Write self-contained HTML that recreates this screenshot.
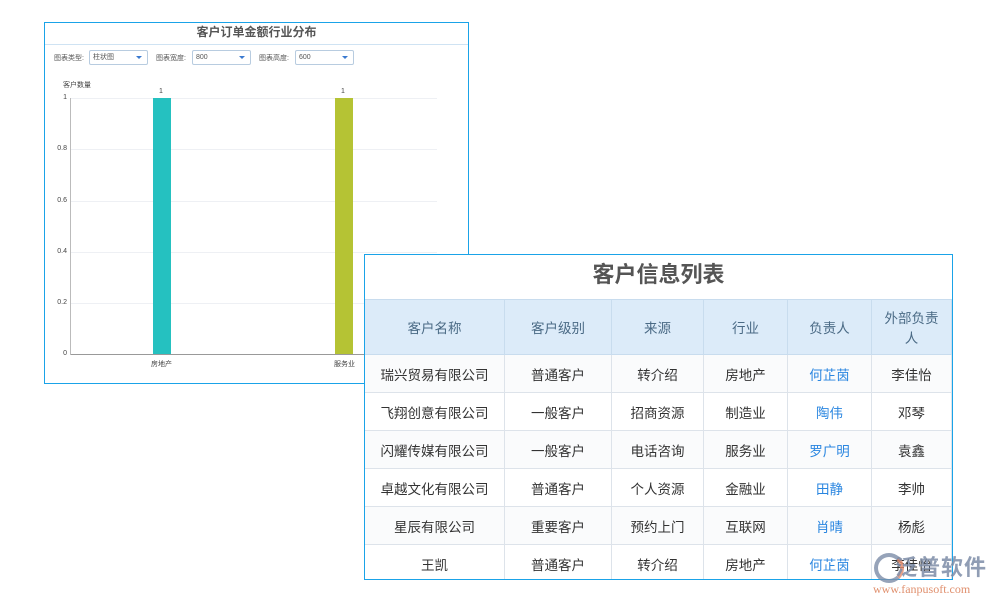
<!DOCTYPE html><html><head><meta charset="utf-8"><style>
body{margin:0;width:1000px;height:600px;background:#fff;position:relative;overflow:hidden;font-family:"Liberation Sans","Noto Sans CJK SC",sans-serif}
.a{position:absolute}
.chart{left:44px;top:22px;width:423px;height:360px;border:1px solid #1aa3e8;background:#fff}
.sel{position:absolute;top:27px;height:13px;border:1px solid #b8cce0;border-radius:2px;font-size:7px;line-height:13px;padding-left:3px;color:#555}
.sel:after{content:"";position:absolute;right:5px;top:5px;border:3px solid transparent;border-top:3px solid #3b7ad0}
.lbl{position:absolute;top:30px;font-size:7px;color:#555}
.gl{position:absolute;left:26px;width:366px;height:1px;background:#eef0f4}
.yl{position:absolute;left:10px;width:12px;text-align:right;font-size:7px;color:#444}
.tbl{left:364px;top:254px;width:587px;height:324px;border:1px solid #1aa3e8;background:#fff;overflow:hidden}
table{border-collapse:collapse;position:absolute;top:44px;left:-1px;width:588px}
td,th{border:1px solid #dde3ea;text-align:center;font-size:13.5px;color:#333;padding:0}
th{background:#dcebf9;color:#4a6a85;font-weight:normal;height:54px;border-color:#c8dcee}
td{height:37px}
tr:nth-child(even) td{background:#fafbfc}
.b{color:#2a86e0}
</style></head><body>
<div class="a chart">
<div class="a" style="left:0;top:0;width:423px;height:21px;border-bottom:1px solid #cfe3f3;text-align:center;font-size:12px;font-weight:bold;color:#555;line-height:19px">客户订单金额行业分布</div>
<div class="lbl" style="left:9px">图表类型:</div><div class="sel" style="left:44px;width:54px">柱状图</div>
<div class="lbl" style="left:111px">图表宽度:</div><div class="sel" style="left:147px;width:54px">800</div>
<div class="lbl" style="left:214px">图表高度:</div><div class="sel" style="left:250px;width:54px">600</div>
<div class="a" style="left:18px;top:57px;font-size:7px;color:#444">客户数量</div>
<div class="gl" style="top:75px"></div><div class="gl" style="top:126px"></div><div class="gl" style="top:178px"></div><div class="gl" style="top:229px"></div><div class="gl" style="top:280px"></div>
<div class="a" style="left:26px;top:331px;width:366px;height:1px;background:#999"></div>
<div class="a" style="left:25px;top:75px;width:1px;height:257px;background:#bbb"></div>
<div class="yl" style="top:71px">1</div><div class="yl" style="top:122px">0.8</div><div class="yl" style="top:174px">0.6</div><div class="yl" style="top:225px">0.4</div><div class="yl" style="top:276px">0.2</div><div class="yl" style="top:327px">0</div>
<div class="a" style="left:108px;top:75px;width:18px;height:256px;background:#25c1c0"></div>
<div class="a" style="left:290px;top:75px;width:18px;height:256px;background:#b5c334"></div>
<div class="a" style="left:114px;top:65px;font-size:7px;color:#444">1</div>
<div class="a" style="left:296px;top:65px;font-size:7px;color:#444">1</div>
<div class="a" style="left:106px;top:336px;font-size:7px;color:#444">房地产</div>
<div class="a" style="left:289px;top:336px;font-size:7px;color:#444">服务业</div>
</div>
<div class="a tbl">
<div class="a" style="left:0;top:0;width:587px;height:44px;text-align:center;font-size:22px;font-weight:bold;color:#555;line-height:40px">客户信息列表</div>
<table>
<tr><th style="width:139px">客户名称</th><th style="width:106px">客户级别</th><th style="width:91px">来源</th><th style="width:83px">行业</th><th style="width:83px">负责人</th><th>外部负责<br>人</th></tr>
<tr><td>瑞兴贸易有限公司</td><td>普通客户</td><td>转介绍</td><td>房地产</td><td class="b">何芷茵</td><td>李佳怡</td></tr>
<tr><td>飞翔创意有限公司</td><td>一般客户</td><td>招商资源</td><td>制造业</td><td class="b">陶伟</td><td>邓琴</td></tr>
<tr><td>闪耀传媒有限公司</td><td>一般客户</td><td>电话咨询</td><td>服务业</td><td class="b">罗广明</td><td>袁鑫</td></tr>
<tr><td>卓越文化有限公司</td><td>普通客户</td><td>个人资源</td><td>金融业</td><td class="b">田静</td><td>李帅</td></tr>
<tr><td>星辰有限公司</td><td>重要客户</td><td>预约上门</td><td>互联网</td><td class="b">肖晴</td><td>杨彪</td></tr>
<tr><td>王凯</td><td>普通客户</td><td>转介绍</td><td>房地产</td><td class="b">何芷茵</td><td>李佳怡</td></tr>
</table></div>
<div class="a" style="left:874px;top:553px;width:22px;height:22px;border-radius:50%;border:4px solid #7d8da8;border-right-color:#e58a6a;opacity:.8"></div>
<div class="a" style="left:895px;top:550px;font-size:22px;font-weight:bold;color:#7d8da8;letter-spacing:1px;opacity:.85">泛普软件</div>
<div class="a" style="left:873px;top:582px;font-size:12px;color:#e0906e;font-family:'Liberation Serif',serif">www.fanpusoft.com</div>
</body></html>
